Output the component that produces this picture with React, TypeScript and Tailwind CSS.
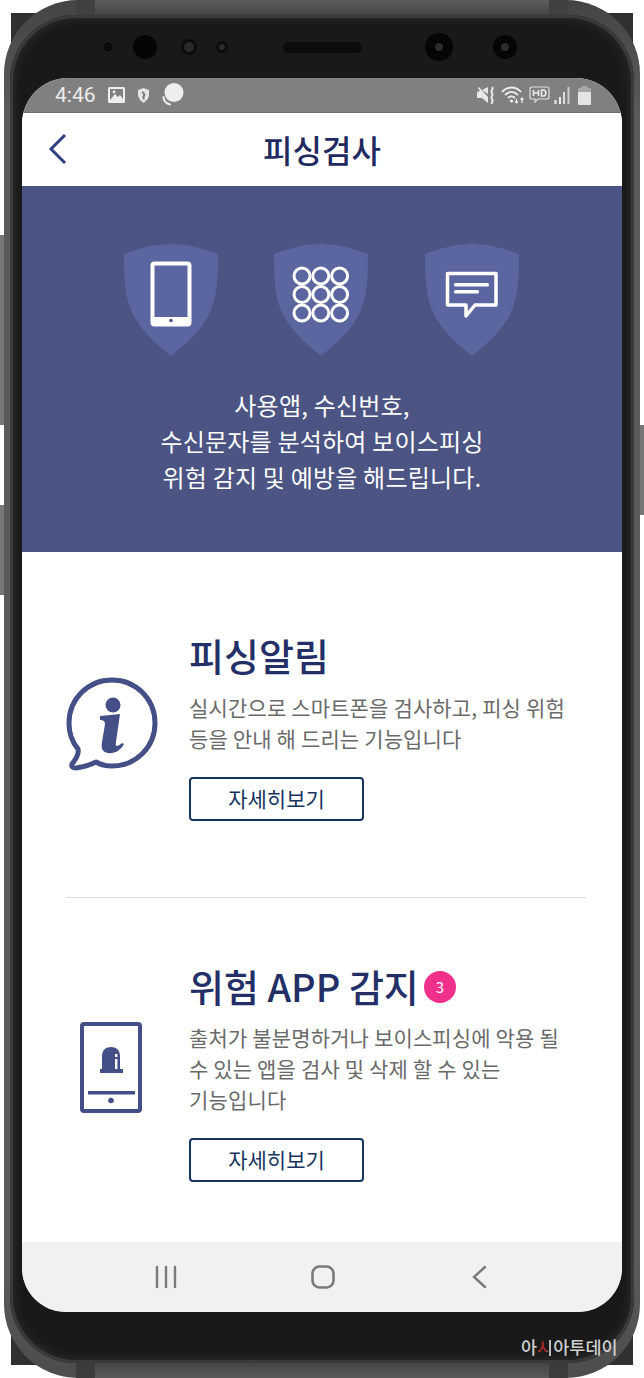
const font = "font-['Noto_Sans_CJK_KR','Noto_Sans',sans-serif]";

const Shield = ({ children }: { children: React.ReactNode }) => (
    <svg width="94" height="112" viewBox="0 0 94 112">
        <path
            d="M0 10 C16 4 31 0 47 0 C63 0 78 4 94 10 C94 34 93 52 87 66 C80 84 62 100 47 112 C32 100 14 84 7 66 C1 52 0 34 0 10 Z"
            fill="#5b65a0"
        />
        {children}
    </svg>
);

const DetailButton = () => (
    <button className="mt-[22px] h-[44px] w-[175px] rounded-[4px] border-2 border-[#17345f] bg-white text-[21px] text-[#17345f]">
        자세히보기
    </button>
);

const InfoIcon = () => (
    <svg className="translate-y-[1px]" width="92" height="94" viewBox="0 0 92 94">
        <path
            d="M46 3 C22 3 3 22 3 46 C3 56 6 65 12 72 C13 76 11 81 6 87 C5 90 7 91 10 91 C18 90 24 88 30 85 C35 88 40 89 46 89 C70 89 89 70 89 46 C89 22 70 3 46 3 Z"
            fill="none"
            stroke="#444f88"
            strokeWidth="5"
            strokeLinejoin="round"
        />
        <circle cx="47" cy="28" r="7.5" fill="#444f88" />
        <path
            d="M34 39 L54 37 L50 65 C49 70 51 70 56 66 L58 67 C54 74 48 77 42 76 C36 75 35 71 36 65 L39 47 C39 44 37 43 34 43 Z"
            fill="#444f88"
        />
    </svg>
);

const AlertPhoneIcon = () => (
    <svg className="-translate-x-[1px]" width="62" height="92" viewBox="0 0 62 92">
        <rect x="2" y="2" width="58" height="87" rx="2" fill="none" stroke="#444f88" strokeWidth="4" />
        <path d="M22 48 V34 C22 28 26 25 31 25 C36 25 40 28 40 34 V48 Z" fill="#444f88" />
        <rect x="20" y="47" width="23" height="4" fill="#444f88" />
        <rect x="35" y="32" width="2.4" height="3" fill="#fff" />
        <rect x="35" y="37" width="2.4" height="10" fill="#fff" />
        <rect x="8" y="69" width="47" height="3.5" fill="#444f88" />
        <circle cx="31" cy="78.5" r="2.8" fill="#444f88" />
    </svg>
);

const StatusLeft = () => (
    <div className="flex items-center">
        <span className="font-['Roboto',sans-serif] text-[21px] leading-none text-[#eeeeee]">4:46</span>
        <svg className="ml-[12px]" width="17" height="16" viewBox="0 0 17 16">
            <rect width="17" height="16" rx="1.5" fill="#eee" />
            <rect x="2" y="2" width="13" height="12" fill="#808080" />
            <path d="M2 13 L7 7 L10 10 L12 8 L15 12 V14 H2 Z" fill="#eee" />
            <circle cx="6" cy="5" r="1.4" fill="#eee" />
        </svg>
        <svg className="ml-[13px]" width="11" height="15" viewBox="0 0 11 15">
            <path d="M0 2 L5.5 0 L11 2 V7 C11 10 8 13 5.5 15 C3 13 0 10 0 7 Z" fill="#e4e4e4" />
            <path d="M4 4 C6 5 7 6 6 8 C5 9 5 10 6.5 11" fill="none" stroke="#777" strokeWidth="1.8" />
        </svg>
        <svg className="ml-[13px]" width="22" height="24" viewBox="0 0 22 24">
            <circle cx="12" cy="9.5" r="9.5" fill="#eeeeee" />
            <path d="M1.5 14 C1.5 18 4 20.5 8 21.5" fill="none" stroke="#eeeeee" strokeWidth="2" strokeLinecap="round" />
        </svg>
    </div>
);

const StatusRight = () => (
    <div className="flex items-center">
        <svg width="18" height="18" viewBox="0 0 18 18">
            <path d="M0 6 L3 5 L1 2 L2 1 L11 11 V17 L5 12 H0 Z M5 4 L11 1 V8 Z" fill="#e8e8e8" />
            <path d="M15 1 C17 3 13 5 15 7 C17 9 13 11 15 13 C17 15 14 16 15 18" fill="none" stroke="#e8e8e8" strokeWidth="2" />
        </svg>
        <svg className="ml-[6px]" width="24" height="18" viewBox="0 0 24 18">
            <path d="M1 6 C6 0 15 0 20 6 M4 9 C8 5 13 5 17 9 M7 12 C9 10 12 10 14 12" fill="none" stroke="#eee" strokeWidth="1.8" />
            <circle cx="10.5" cy="15" r="1.6" fill="#eee" />
            <path d="M15.5 13 V17 M21 12 V17 M19.5 13.5 L21 12 L22.5 13.5 M14 15.5 L15.5 17 L17 15.5" fill="none" stroke="#eee" strokeWidth="1.2" />
        </svg>
        <svg className="ml-[4px]" width="21" height="18" viewBox="0 0 21 18">
            <path d="M3 1 H18 C19.5 1 20 1.5 20 3 V11 C20 12.5 19.5 13 18 13 H9 L6 16 V13 H3 C1.5 13 1 12.5 1 11 V3 C1 1.5 1.5 1 3 1 Z" fill="none" stroke="#ddd" strokeWidth="1.2" />
            <path d="M4.5 4 V10 M9.5 4 V10 M4.5 7 H9.5 M12.5 4 V10 H14.5 C17.5 10 17.5 4 14.5 4 Z" fill="none" stroke="#eee" strokeWidth="1.5" />
        </svg>
        <svg className="ml-[4px]" width="16" height="17" viewBox="0 0 16 17">
            <rect x="0.5" y="13" width="2" height="4" fill="#eee" />
            <rect x="5" y="10" width="2" height="7" fill="#eee" />
            <rect x="9" y="5" width="2" height="12" fill="#ddd" />
            <rect x="13.5" y="0" width="2" height="17" fill="#ccc" />
        </svg>
        <svg className="ml-[8px]" width="13" height="19" viewBox="0 0 13 19">
            <rect x="3.5" y="0" width="6" height="3" fill="#a8a8a8" />
            <rect x="0" y="2" width="13" height="5" rx="1" fill="#a8a8a8" />
            <rect x="0" y="6" width="13" height="13" rx="1" fill="#e4e4e4" />
        </svg>
    </div>
);

const App = () => {
    return (
        <div className={`relative h-[1378px] w-[644px] overflow-hidden bg-white px-[4px] ${font}`}>
            {/* side keys */}
            <div className="absolute left-0 top-[235px] h-[190px] w-[4px] bg-[#777777]" />
            <div className="absolute left-0 top-[505px] h-[90px] w-[4px] bg-[#777777]" />
            <div className="absolute right-0 top-[425px] h-[90px] w-[4px] bg-[#777777]" />

            {/* shadow corners behind the body */}
            <div className="absolute left-[11px] top-[13px] h-[32px] w-[32px] bg-[#303030]" />
            <div className="absolute right-[11px] top-[13px] h-[32px] w-[32px] bg-[#303030]" />
            <div className="absolute bottom-[13px] left-[11px] h-[32px] w-[32px] bg-[#303030]" />
            <div className="absolute bottom-[13px] right-[11px] h-[32px] w-[32px] bg-[#303030]" />

            <div className="relative flex h-full w-[636px] flex-col overflow-hidden rounded-[74px] bg-[linear-gradient(180deg,#444444,#5a5a5a_8%,#5a5a5a_92%,#4c4c4c)] px-[6px] py-[15px]">
                {/* top and bottom edge bands */}
                <div className="absolute left-[72px] top-0 h-[15px] w-[492px] bg-[#404040]" />
                <div className="absolute left-[91px] top-0 h-[15px] w-[454px] bg-[linear-gradient(180deg,#5e5e5e,#444444)]" />
                <div className="absolute bottom-0 left-[72px] h-[15px] w-[492px] bg-[#3c3c3c]" />
                <div className="absolute bottom-0 left-[91px] h-[15px] w-[454px] bg-[linear-gradient(180deg,#444444,#5a5a5a)]" />

                <div className="relative flex h-full flex-col rounded-[66px] bg-[#191919] px-[12px] shadow-[inset_0_0_0_3px_#3a3a3a,inset_0_0_10px_5px_#2a2a2a]">
                    {/* camera row */}
                    <div className="flex h-[63px] shrink-0 items-start pt-[20px]">
                        <div className="ml-[81px] mt-[7px] h-[10px] w-[10px] rounded-full bg-[#0a0a0a] shadow-[0_0_2px_#333]" />
                        <div className="ml-[20px] h-[24px] w-[24px] rounded-full bg-[#050505]" />
                        <div className="ml-[24px] mt-[4px] h-[16px] w-[16px] rounded-full border-[3px] border-[#0c0c0c] bg-[#2a2a2a]" />
                        <div className="ml-[19px] mt-[6px] h-[12px] w-[12px] rounded-full border-[3px] border-[#0c0c0c] bg-[#2a2a2a]" />
                        <div className="ml-[55px] mt-[7px] h-[11px] w-[79px] rounded-full bg-[#0c0c0c]" />
                        <div className="ml-[63px] flex h-[28px] w-[28px] -translate-y-[2px] items-center justify-center rounded-full bg-[#050505]">
                            <div className="h-[8px] w-[8px] rounded-full bg-[#2b2b2b]" />
                        </div>
                        <div className="ml-[40px] flex h-[24px] w-[24px] items-center justify-center rounded-full bg-[#050505]">
                            <div className="h-[8px] w-[8px] rounded-full bg-[#2b2b2b]" />
                        </div>
                    </div>

                    {/* screen */}
                    <div className="flex h-[1234px] w-[600px] shrink-0 flex-col overflow-hidden rounded-b-[44px] rounded-t-[46px] bg-white">
                        <div className="flex h-[35px] shrink-0 items-center justify-between border-b border-[#6e6e6e] bg-[#808080] pl-[33px] pr-[31px]">
                            <StatusLeft />
                            <StatusRight />
                        </div>

                        <header className="relative flex h-[73px] shrink-0 items-center justify-center bg-white">
                            <svg className="absolute left-[26px] top-[20px]" width="20" height="32" viewBox="0 0 20 32">
                                <path d="M17 2 L3 16 L17 30" fill="none" stroke="#2f3f7f" strokeWidth="3" />
                            </svg>
                            <h1 className="-translate-y-[1px] text-[32px] font-medium leading-none text-[#1f2a60]">피싱검사</h1>
                        </header>

                        <section className="flex h-[366px] shrink-0 flex-col items-center bg-[#4b5482] pt-[58px]">
                            <div className="flex -translate-x-[1px] gap-[56.5px]">
                                <Shield>
                                    <rect x="28.5" y="19.5" width="37" height="61" rx="2" fill="none" stroke="#fff" strokeWidth="4" />
                                    <rect x="28.5" y="73" width="37" height="8" fill="#fff" />
                                    <circle cx="47" cy="76.5" r="1.8" fill="#4b5482" />
                                </Shield>
                                <Shield>
                                    {[32, 50.5, 69].map((cy) =>
                                        [28, 46.8, 65.6].map((cx) => (
                                            <circle key={`${cx}-${cy}`} cx={cx} cy={cy} r="8" fill="none" stroke="#fff" strokeWidth="3" />
                                        ))
                                    )}
                                </Shield>
                                <Shield>
                                    <path
                                        d="M22.5 29.5 H71 V61 H50 L41 72 V61 H22.5 Z"
                                        fill="none"
                                        stroke="#fff"
                                        strokeWidth="3.5"
                                        strokeLinejoin="round"
                                    />
                                    <rect x="29" y="39" width="35" height="3.5" rx="1.5" fill="#fff" />
                                    <rect x="29" y="46" width="25" height="3.5" rx="1.5" fill="#fff" />
                                </Shield>
                            </div>
                            <p className="mt-[31px] whitespace-nowrap text-center text-[24px] leading-[36px] tracking-[0.2px] text-white">
                                사용앱, 수신번호,
                                <br />
                                수신문자를 분석하여 보이스피싱
                                <br />
                                위험 감지 및 예방을 해드립니다.
                            </p>
                        </section>

                        <main className="min-h-0 flex-1 bg-white px-[44px]">
                            <div className="flex items-center pt-[82px]">
                                <div className="mb-[10px] flex w-[92px] justify-center">
                                    <InfoIcon />
                                </div>
                                <div className="ml-[31px]">
                                    <h2 className="-translate-y-[2px] text-[38px] font-medium leading-[46px] text-[#232f66]">피싱알림</h2>
                                    <p className="mt-[12px] mb-[1px] whitespace-nowrap text-[21px] leading-[31px] tracking-[0.15px] text-[#6a6a6a]">
                                        실시간으로 스마트폰을 검사하고, 피싱 위험
                                        <br />
                                        등을 안내 해 드리는 기능입니다
                                    </p>
                                    <DetailButton />
                                </div>
                            </div>

                            <div className="mt-[76px] h-px w-[520px] bg-[#dddddd]" />

                            <div className="flex items-center pt-[66px]">
                                <div className="mb-[10px] flex w-[92px] justify-center">
                                    <AlertPhoneIcon />
                                </div>
                                <div className="ml-[31px]">
                                    <div className="flex items-center">
                                        <h2 className="-translate-y-[1px] text-[38px] font-medium leading-[46px] text-[#232f66]">위험 APP 감지</h2>
                                        <span className="ml-[5px] flex h-[32px] w-[32px] items-center justify-center rounded-full bg-[#f0308a] text-[15px] text-white">
                                            3
                                        </span>
                                    </div>
                                    <p className="mt-[12px] mb-[1px] whitespace-nowrap text-[21px] leading-[31px] tracking-[0.15px] text-[#6a6a6a]">
                                        출처가 불분명하거나 보이스피싱에 악용 될
                                        <br />
                                        수 있는 앱을 검사 및 삭제 할 수 있는
                                        <br />
                                        기능입니다
                                    </p>
                                    <DetailButton />
                                </div>
                            </div>
                        </main>

                        <nav className="flex h-[70px] shrink-0 items-center bg-[#f1f1f1] pl-[133px]">
                            <svg width="22" height="24" viewBox="0 0 22 24">
                                <path d="M2 2 V22 M11 2 V22 M20 2 V22" stroke="#7a7a7a" strokeWidth="2.4" strokeLinecap="round" />
                            </svg>
                            <svg className="ml-[133px]" width="26" height="26" viewBox="0 0 26 26">
                                <rect x="2.5" y="2.5" width="21" height="21" rx="7" fill="none" stroke="#7a7a7a" strokeWidth="2.6" />
                            </svg>
                            <svg className="ml-[135px]" width="16" height="24" viewBox="0 0 16 24">
                                <path d="M14 2 L3 12 L14 22" fill="none" stroke="#7a7a7a" strokeWidth="2.4" strokeLinecap="round" />
                            </svg>
                        </nav>
                    </div>
                </div>
            </div>

            <span className="absolute left-[521px] top-[1334px] whitespace-nowrap text-[17.5px] font-medium leading-[26px] text-[#cfcfcf]">
                아<span className="bg-[linear-gradient(90deg,#a82a2a_62%,#cfcfcf_62%)] bg-clip-text text-transparent">시</span>아투데이
            </span>
        </div>
    );
};

export default App;
